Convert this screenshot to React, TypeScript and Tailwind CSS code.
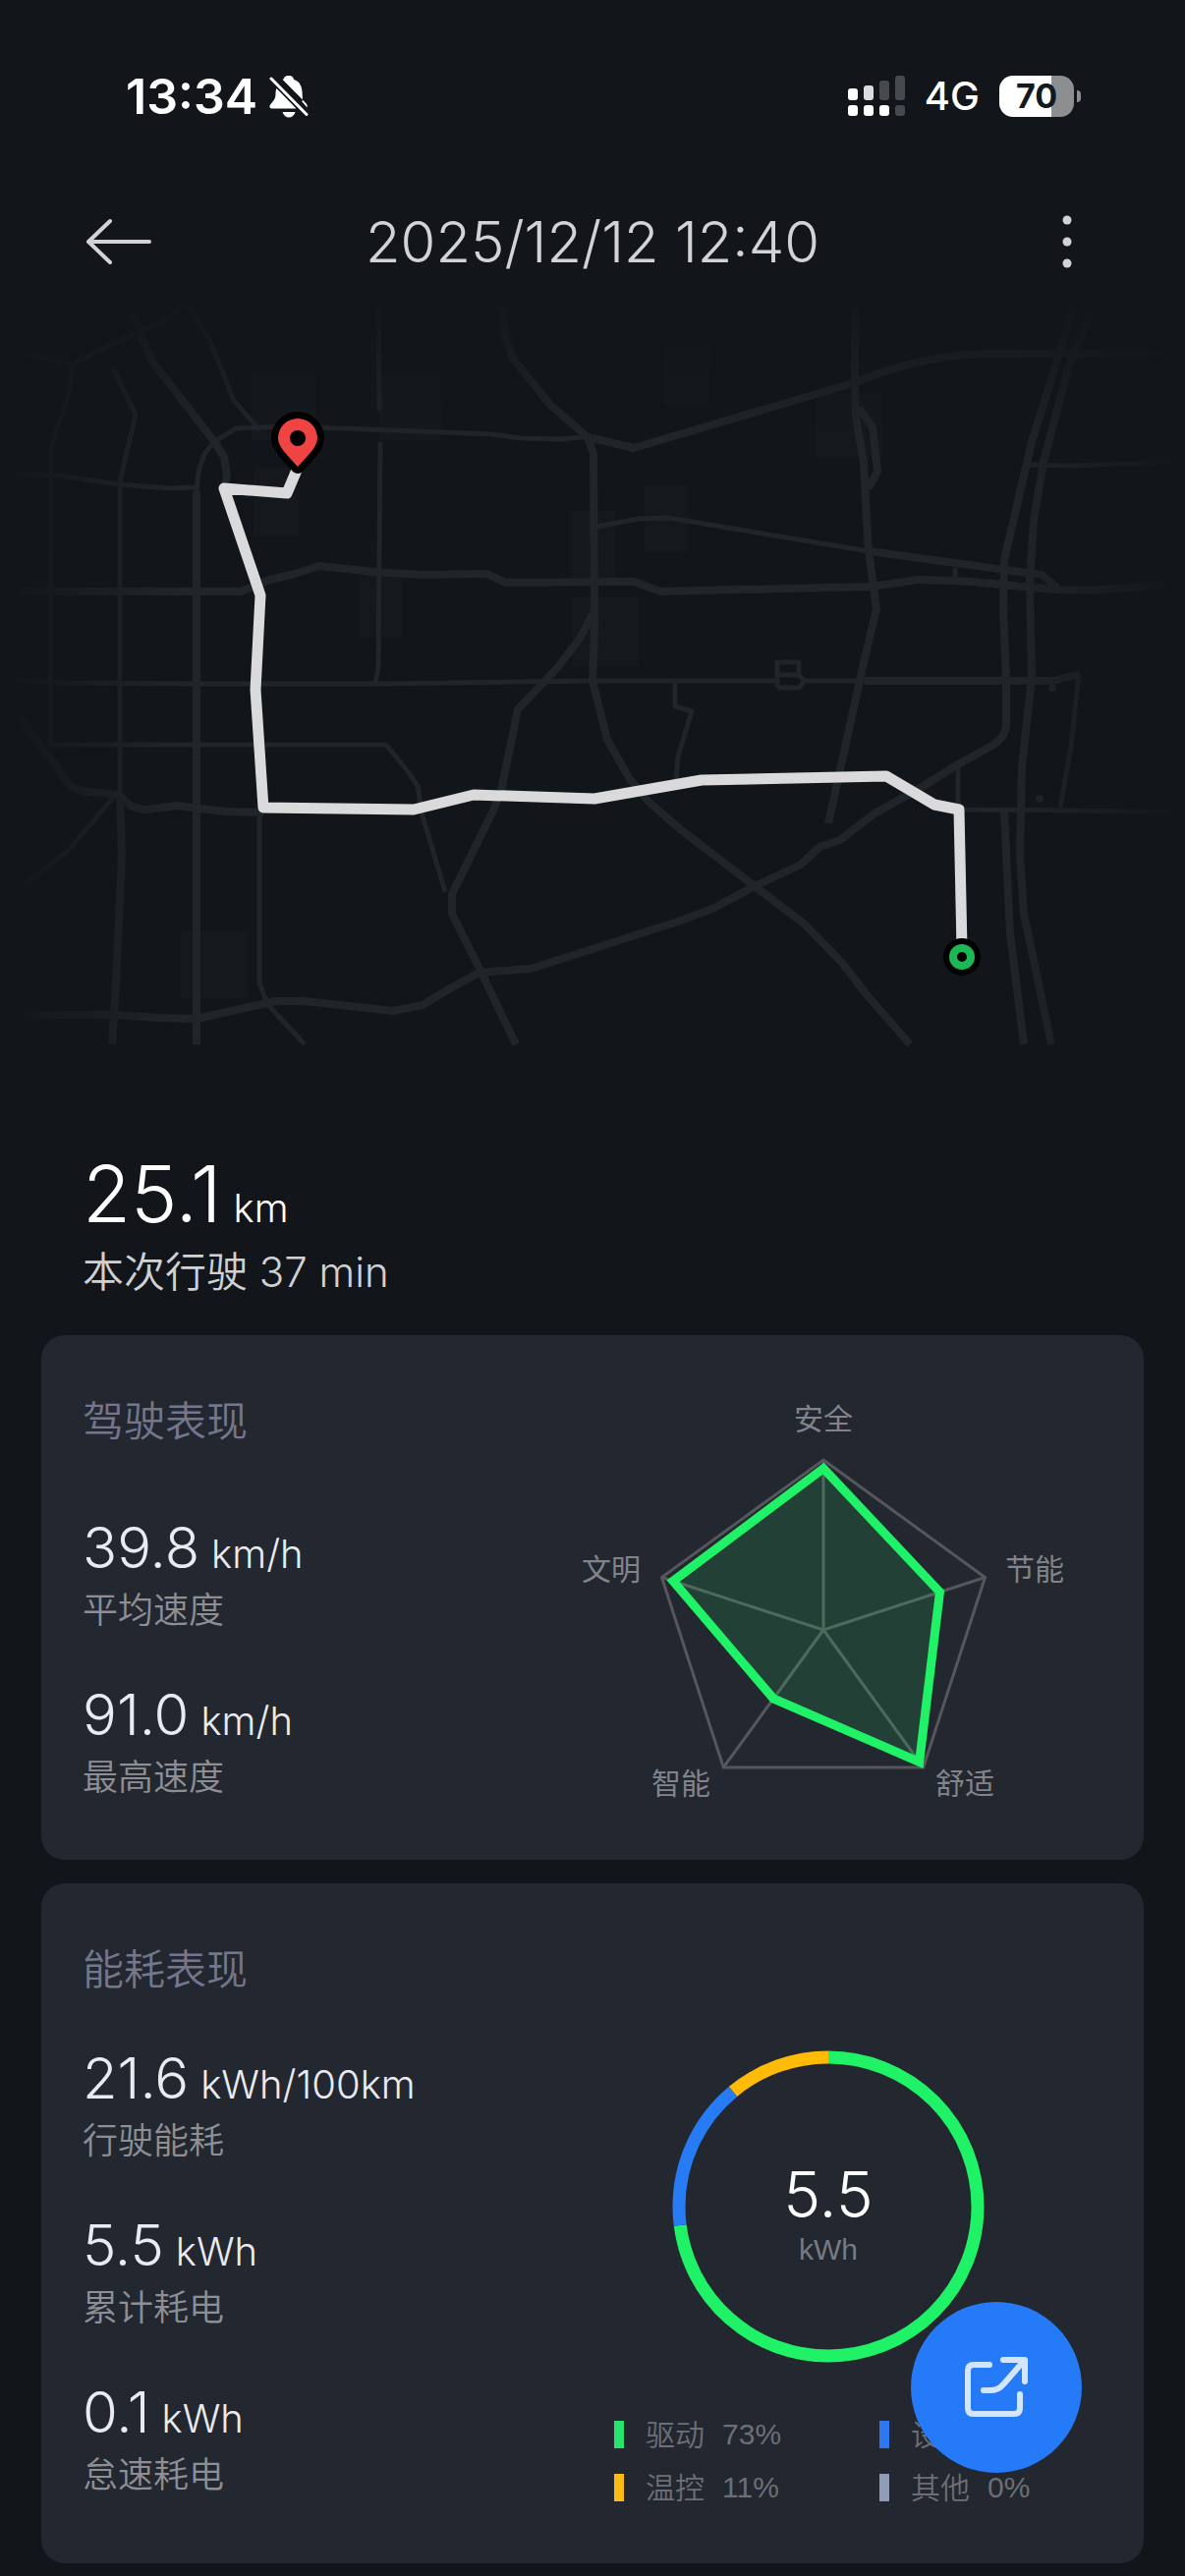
const blocks = [
  { x: 256, y: 380, w: 66, h: 68 },
  { x: 386, y: 380, w: 63, h: 68 },
  { x: 258, y: 476, w: 46, h: 70 },
  { x: 365, y: 585, w: 44, h: 64 },
  { x: 676, y: 352, w: 46, h: 60 },
  { x: 830, y: 400, w: 68, h: 66 },
  { x: 656, y: 494, w: 44, h: 68 },
  { x: 580, y: 520, w: 46, h: 70 },
  { x: 582, y: 608, w: 68, h: 70 },
  { x: 184, y: 948, w: 68, h: 68 },
];

const mainRoads = [
  "M135 318L143 340L155 368L217 448L228 465L231 485L228 497",
  "M512 312L513 340L522 365L560 412L598 445L604 462L605 640L603 693L618 753L641 793L661 817L691 843L768 902L818 940L857 980L880 1010L926 1063",
  "M603 446L645 456L868 390Q940 360 1010 360L1190 360",
  "M20 602H245L275 590L300 584L325 576L380 582L430 585L495 584L515 593L645 592L672 602L888 597L934 590L988 592L1072 600L1110 601L1188 595",
  "M884 561L1060 585L1078 600",
  "M870 312V390L871 425L879 470L882 530L884 560L892 620L880 670L843 838",
  "M874 415L888 435L893 480L884 497",
  "M1095 305L1075 370L1050 450L1022 570L1021 620L1024 690V740Q1022 752 1008 760L975 778L935 803L890 828L855 855L834 862L815 880L768 902L725 925L690 938L603 966L540 986L488 990L460 1005L430 1023L400 1029L310 1019L280 1019L200 1037L160 1036L120 1033L25 1033",
  "M1110 320L1088 372L1062 470L1052 530L1048 590L1050 690L1040 780L1038 870L1042 930L1070 1063",
  "M1022 826L1028 950L1042 1063",
  "M880 693H1072L1098 686",
  "M603 625L590 650L567 680L527 722L510 805L502 825L460 910V930L490 990L525 1063",
  "M122 810L124 870L118 1000L114 1063",
  "M20 730L70 798Q76 805 90 806L122 809Q132 824 150 824L180 820L230 826L268 827",
  "M200 1063V500",
];

const sideRoads = [
  "M18 358L73 371L140 338L165 328L190 310",
  "M73 373L70 400L52 455L51 758",
  "M115 375L138 422L122 490V810",
  "M192 312L213 345L225 375L238 408L265 438",
  "M200 500L202 480L208 462L218 450L240 436L290 434L350 436L500 442L530 446L570 447L603 444",
  "M12 482L60 484L122 493L170 497L200 496",
  "M385 312L386 418",
  "M387 450L385 680L382 694",
  "M603 537L650 528L680 527L884 561",
  "M1043 473L1090 474L1195 470",
  "M10 692L60 695L200 696H390L600 693H790",
  "M820 693H880",
  "M1098 686L1090 760L1079 822",
  "M791 700V674H813V687M791 687H813L819 693L813 700H791",
  "M687 694V719L704 724L690 770L688 793",
  "M975 778V824L1195 826",
  "M972 578V592",
  "M51 758H393L415 785L425 800L430 830L453 908",
  "M25 900L70 865L115 812",
  "M264 830V1000L272 1022L310 1063",
];

const axes = [
  { label: "安全", value: 0.95, x: 250, y: 36 },
  { label: "节能", value: 0.72, x: 465, y: 189 },
  { label: "舒适", value: 0.96, x: 394, y: 407 },
  { label: "智能", value: 0.5, x: 105, y: 407 },
  { label: "文明", value: 0.93, x: 34, y: 189 },
];

const driving = [
  { value: "39.8", unit: "km/h", label: "平均速度" },
  { value: "91.0", unit: "km/h", label: "最高速度" },
];

const energy = [
  { value: "21.6", unit: "kWh/100km", label: "行驶能耗" },
  { value: "5.5", unit: "kWh", label: "累计耗电" },
  { value: "0.1", unit: "kWh", label: "怠速耗电" },
];

const usage = [
  { label: "驱动", percent: 73, color: "#20f267", swatch: "bg-[#25e36c]" },
  { label: "设备", percent: 16, color: "#277bf5", swatch: "bg-[#2d78f0]" },
  { label: "温控", percent: 11, color: "#ffbb05", swatch: "bg-[#fcba14]" },
  { label: "其他", percent: 0, color: "#8f9db8", swatch: "bg-[#8f9db8]" },
];

const StatusBar = () => (
  <div className="flex h-[196px] items-center justify-between pl-32 pr-[106px] text-white">
    <div className="flex items-center gap-3">
      <span className="text-[50px] font-semibold leading-none">13:34</span>
      <svg className="h-11 w-10" viewBox="0 0 40 44" fill="currentColor">
        <path d="M20 1c-4 0-5 2-5 3l-1.400 1L34 25.500C33.500 22 34 18 33 14c-1-5-4-8-8-9-.4-2.500-2-4-5-4z" />
        <path d="M7.500 14 27.500 34.500H2.500C0 34.500 0 31.500 1.500 30 5 26 6.500 24 6.500 19c0-2 .3-3.600 1-5zM13.500 38h13c-1 3.500-3.500 5.500-6.500 5.500s-5.500-2-6.500-5.500zM34.500 26l4 4.500v3L33 27z" />
        <path d="M2 4 38 40.500" fill="none" stroke="currentColor" strokeWidth="3" strokeLinecap="round" />
      </svg>
    </div>
    <div className="flex items-center gap-5">
      <svg className="h-[42px] w-[58px]" viewBox="0 0 58 42" fill="currentColor">
        <rect x="0" y="13" width="10" height="12" rx="3" />
        <rect x="16" y="10" width="10" height="15" rx="3" opacity=".85" />
        <rect x="32" y="5" width="10" height="20" rx="3" opacity=".22" />
        <rect x="48" y="0" width="10" height="25" rx="3" opacity=".22" />
        <rect x="0" y="30" width="10" height="11" rx="3" />
        <rect x="16" y="30" width="10" height="11" rx="3" />
        <rect x="32" y="30" width="10" height="11" rx="3" />
        <rect x="48" y="30" width="10" height="11" rx="3" opacity=".22" />
      </svg>
      <span className="text-[40px] font-medium leading-none">4G</span>
      <div className="flex items-center gap-[3px]">
        <div className="flex h-[42px] w-[76px] items-center justify-center rounded-[14px] bg-linear-to-r from-white from-70% to-[#8d8e90] to-70% text-[34px] font-bold leading-none text-[#15181c]">
          70
        </div>
        <div className="h-3 w-1 rounded-r-full bg-[#8d8e90]" />
      </div>
    </div>
  </div>
);

const TitleBar = () => (
  <header className="flex h-[100px] items-center justify-between px-[84px] text-[#d2d3d5]">
    <button type="button" aria-label="返回" className="w-[72px]">
      <svg className="h-[52px] w-[72px]" viewBox="0 0 72 52" fill="none" stroke="currentColor" strokeWidth="4" strokeLinecap="round" strokeLinejoin="round">
        <path d="M68 26H6M28 5 6 26l22 21" />
      </svg>
    </button>
    <h1 className="text-[58px] font-[350] leading-none">2025/12/12 12:40</h1>
    <button type="button" aria-label="更多" className="flex w-[72px] justify-center">
      <svg className="h-[56px] w-3" viewBox="0 0 12 56" fill="currentColor">
        <circle cx="6" cy="6" r="4.500" />
        <circle cx="6" cy="28" r="4.500" />
        <circle cx="6" cy="50" r="4.500" />
      </svg>
    </button>
  </header>
);

const RouteMap = () => (
  <svg className="block w-full" viewBox="0 296 1206 774" fill="none" role="img" aria-label="行驶路线">
    <defs>
      <linearGradient id="fade-left">
        <stop stopColor="#12161b" />
        <stop offset="1" stopColor="#12161b" stopOpacity="0" />
      </linearGradient>
      <linearGradient id="fade-right">
        <stop stopColor="#12161b" stopOpacity="0" />
        <stop offset="1" stopColor="#12161b" />
      </linearGradient>
      <linearGradient id="fade-top" x2="0" y2="1">
        <stop stopColor="#12161b" />
        <stop offset="1" stopColor="#12161b" stopOpacity="0" />
      </linearGradient>
    </defs>
    {blocks.map((b) => (
      <rect key={`${b.x}-${b.y}`} x={b.x} y={b.y} width={b.w} height={b.h} fill="#15191e" />
    ))}
    <g stroke="#20252a" strokeWidth="5" strokeLinejoin="round">
      {sideRoads.map((d) => (
        <path key={d} d={d} />
      ))}
    </g>
    <g stroke="#20252a" strokeWidth="8" strokeLinejoin="round">
      {mainRoads.map((d) => (
        <path key={d} d={d} />
      ))}
    </g>
    <circle cx="1071" cy="700" r="4" fill="#20252a" />
    <circle cx="1058" cy="813" r="4" fill="#20252a" />
    <rect x="0" y="296" width="180" height="774" fill="url(#fade-left)" />
    <rect x="1026" y="296" width="180" height="774" fill="url(#fade-right)" />
    <rect x="0" y="296" width="1206" height="150" fill="url(#fade-top)" />

    <path
      d="M303 476L292 502L228 497L265 606L260 702L268 822L421 824L482 809L605 813L714 794L902 790L951 819L976 824L979 966"
      stroke="#dadadc"
      strokeWidth="11"
      strokeLinejoin="round"
    />
    <circle cx="979" cy="974" r="19" fill="#000" />
    <circle cx="979" cy="974" r="9" stroke="#1db855" strokeWidth="8" />
    <path
      d="M303 475C293 464 283 455 283 446a20 20 0 0 1 40 0C323 455 313 464 303 475Z"
      fill="#f04444"
      stroke="#000"
      strokeWidth="14"
      strokeLinejoin="round"
      paintOrder="stroke"
    />
    <circle cx="303" cy="446" r="8" fill="#000" />
  </svg>
);

const point = (index: number, ratio: number) => {
  const angle = (index * 72 - 90) * (Math.PI / 180);
  return `${250 + Math.cos(angle) * 173 * ratio},${240 + Math.sin(angle) * 173 * ratio}`;
};

const RadarChart = () => (
  <svg className="w-[500px]" viewBox="0 0 500 420" role="img" aria-label="驾驶表现雷达图">
    <g fill="none" stroke="#56575c" strokeWidth="3">
      <polygon points={axes.map((_, i) => point(i, 1)).join(" ")} />
      {axes.map((axis, i) => (
        <polyline key={axis.label} points={`250,240 ${point(i, 1)}`} />
      ))}
    </g>
    <polygon
      points={axes.map((axis, i) => point(i, axis.value)).join(" ")}
      fill="#20f267"
      fillOpacity=".13"
      stroke="#20f267"
      strokeWidth="9"
    />
    <g fill="#82848b" fontSize="30" textAnchor="middle">
      {axes.map((axis) => (
        <text key={axis.label} x={axis.x} y={axis.y}>
          {axis.label}
        </text>
      ))}
    </g>
  </svg>
);

const UsageRing = () => {
  let start = 0;
  return (
    <svg className="h-[318px] w-[318px]" viewBox="0 0 318 318" fill="none" role="img" aria-label="能耗分布">
      {usage.map((item) => {
        const offset = -start;
        start += item.percent;
        return (
          item.percent > 0 && (
            <circle
              key={item.label}
              cx="159"
              cy="159"
              r="152"
              stroke={item.color}
              strokeWidth="13"
              pathLength="100"
              strokeDasharray={`${item.percent} 100`}
              strokeDashoffset={offset}
              transform="rotate(-90 159 159)"
            />
          )
        );
      })}
    </svg>
  );
};

const Metric = ({ value, unit, label }: { value: string; unit: string; label: string }) => (
  <div>
    <div className="flex items-baseline gap-3 font-[350] text-[#e9ebf0]">
      <span className="text-[58px] leading-[72px]">{value}</span>
      <span className="text-[40px] leading-none">{unit}</span>
    </div>
    <div className="text-[36px] font-[350] leading-[56px] text-[#8d8f95]">{label}</div>
  </div>
);

export default function App() {
  return (
    <div className="min-h-screen bg-[#12161b] pb-3 font-['Inter','Noto_Sans_CJK_SC',sans-serif]">
      <StatusBar />
      <TitleBar />
      <RouteMap />

      <main className="px-[42px]">
        <section className="px-[42px] pt-[95px]">
          <div className="flex items-baseline gap-3 font-[350] text-white">
            <span className="text-[80px] leading-[100px]">25.1</span>
            <span className="text-[40px] leading-none">km</span>
          </div>
          <p className="text-[42px] font-[350] leading-[60px] text-[#d0d1d3]">本次行驶 37 min</p>
        </section>

        <section className="mt-[34px] flex h-[534px] justify-between rounded-3xl bg-[#23272f] px-[42px] pt-[58px]">
          <div className="flex flex-col">
            <h2 className="text-[42px] font-[350] leading-[60px] text-[#73768c]">驾驶表现</h2>
            <div className="mt-[62px] flex flex-col gap-[42px]">
              {driving.map((item) => (
                <Metric key={item.label} {...item} />
              ))}
            </div>
          </div>
          <div className="mr-[34px] pt-0.5">
            <RadarChart />
          </div>
        </section>

        <section className="mt-6 flex justify-between rounded-3xl bg-[#23272f] px-[42px] pb-[50px] pt-[58px]">
          <div className="flex flex-col">
            <h2 className="text-[42px] font-[350] leading-[60px] text-[#73768c]">能耗表现</h2>
            <div className="mt-[44px] flex flex-col gap-[42px]">
              {energy.map((item) => (
                <Metric key={item.label} {...item} />
              ))}
            </div>
          </div>
          <div className="w-[497px] pt-28">
            <div className="ml-[59px] grid w-[318px] place-items-center">
              <div className="col-start-1 row-start-1">
                <UsageRing />
              </div>
              <div className="col-start-1 row-start-1 pt-4 text-center">
                <div className="text-[64px] font-[350] leading-[72px] text-white">5.5</div>
                <div className="font-['Liberation_Sans',sans-serif] text-[30px] leading-10 text-[#777a81]">kWh</div>
              </div>
            </div>
            <ul className="mt-[46px] grid grid-cols-[270px_1fr] text-[30px] font-[350] leading-[54px] text-[#6c6f76]">
              {usage.map((item) => (
                <li key={item.label} className="flex items-center">
                  <span className={`mr-[22px] h-7 w-[10px] ${item.swatch}`} />
                  <span className="mr-[18px]">{item.label}</span>
                  <span className="font-['Liberation_Sans',sans-serif]">{item.percent}%</span>
                </li>
              ))}
            </ul>
          </div>
        </section>
      </main>

      <button
        type="button"
        aria-label="分享"
        className="fixed bottom-[105px] right-[105px] grid h-[174px] w-[174px] place-items-center rounded-full bg-[#257af7] text-[#d3e6ff]"
      >
        <svg className="h-[64px] w-[66px]" viewBox="0 0 66 64" fill="none" stroke="currentColor" strokeWidth="6" strokeLinecap="round" strokeLinejoin="round">
          <path d="M26 9H10Q4 9 4 15V53Q4 59 10 59H51Q57 59 57 53V39" />
          <path d="M40 4H62V26M61 5 41 28Q35 35 28 35H20" />
        </svg>
      </button>
    </div>
  );
}
